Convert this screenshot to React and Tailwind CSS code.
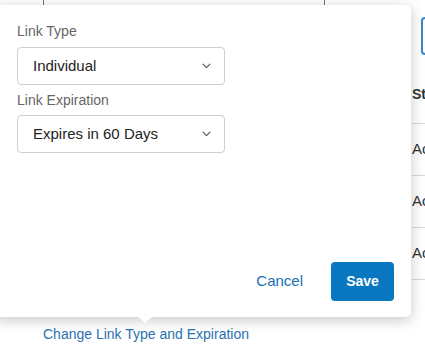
import React from "react";

const Chevron = () => (
  <svg width="9" height="6" viewBox="0 0 9 6" fill="none" className="text-[#5a5a5a]">
    <path d="M1 1.2l3.5 3.5 3.5-3.5" stroke="currentColor" strokeWidth="1.2" strokeLinecap="round" strokeLinejoin="round" />
  </svg>
);

const SelectBox = ({ value }) => (
  <div className="flex h-[38px] w-[208px] items-center justify-between rounded-[4px] border border-[#cfcfcf] bg-white pl-[15px] pr-[13px] text-[15px] text-[#222]">
    <span>{value}</span>
    <Chevron />
  </div>
);

const Row = () => (
  <div className="flex h-[52px] items-center border-b border-[#d9d9d9] text-[15px] text-[#333]">
    Ac
  </div>
);

export default function App() {
  return (
    <div
      className="relative h-[355px] w-[425px] overflow-hidden bg-white"
      style={{ fontFamily: '"Liberation Sans", Arial, sans-serif' }}
    >
      {/* page underneath */}
      <div className="flex h-full">
        <div className="flex w-[412px] shrink-0 flex-col">
          <div className="ml-[43px] h-[6px] w-[282px] border-x border-[#777]" />
          <div className="flex-1" />
          <a className="mb-[10px] ml-[43px] text-[14px] text-[#2a71b3]">
            Change Link Type and Expiration
          </a>
        </div>
        <div className="flex w-[60px] shrink-0 flex-col">
          <div className="ml-[9px] mt-[17px] h-[38px] w-[40px] rounded-[4px] border-2 border-[#3a86c8]" />
          <div className="flex h-[69px] items-center border-b border-[#d9d9d9] pt-[10px] text-[14px] font-bold text-[#333]">
            Status
          </div>
          <Row />
          <Row />
          <Row />
        </div>
      </div>

      {/* popover */}
      <div className="absolute left-[-8px] top-[5px] flex h-[312px] w-[419px] flex-col rounded-[5px] bg-white pb-[16px] pl-[25px] pr-[17px] pt-[18px] shadow-[0_3px_14px_rgba(0,0,0,0.22)]">
        <div className="mb-[7px] text-[14px] leading-[17px] text-[#666]">Link Type</div>
        <SelectBox value="Individual" />
        <div className="mb-[6px] mt-[7px] text-[14px] leading-[17px] text-[#666]">Link Expiration</div>
        <SelectBox value="Expires in 60 Days" />
        <div className="flex-1" />
        <div className="flex items-center justify-end gap-[28px]">
          <button className="text-[15px] text-[#1a6fb6]">Cancel</button>
          <button className="h-[39px] w-[63px] rounded-[4px] bg-[#0a77c1] text-[14px] font-bold text-white">
            Save
          </button>
        </div>
        <div className="absolute bottom-[-6px] left-[146px] h-0 w-0 border-x-[7px] border-t-[6px] border-x-transparent border-t-white" />
      </div>
    </div>
  );
}
